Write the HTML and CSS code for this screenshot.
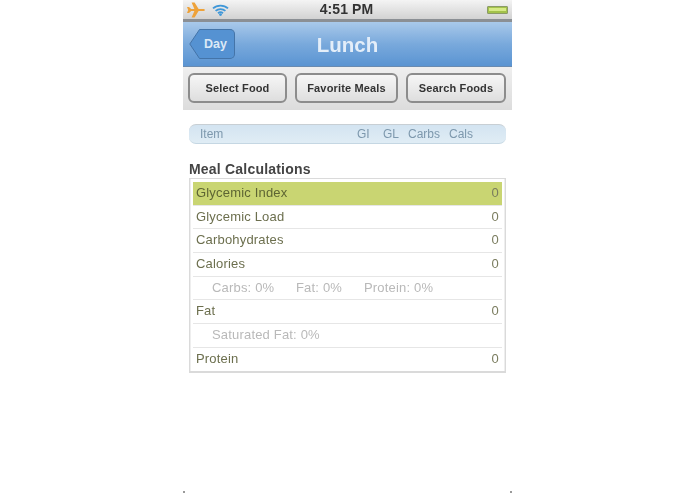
FILE: index.html
```html
<!DOCTYPE html>
<html lang="en">
<head>
<meta charset="utf-8">
<title>Lunch</title>
<link rel="stylesheet" href="styles.css">
</head>
<body>
<main class="phone">
  <header class="status">
    <div class="status-left">
      <svg class="plane" viewBox="0 0 18 16" width="18" height="16"><path d="M0 5 L2 5 L4.2 7 L7.4 7 L4.6 0.6 L7.6 0.6 L11.6 7 L15.6 7 C17.2 7 18 7.6 18 8 C18 8.4 17.2 9 15.6 9 L11.6 9 L7.6 15.4 L4.6 15.4 L7.4 9 L4.2 9 L2 11 L0 11 L1.2 8 Z" fill="#eea23a"/></svg>
      <svg class="wifi" viewBox="0 0 17 12" width="17" height="12"><path d="M1 4.4 C5 0.6 12 0.6 16 4.4 M3.6 6.9 C6.3 4.4 10.7 4.4 13.4 6.9 M6 9.2 C7.4 8 9.6 8 11 9.2" fill="none" stroke="#3f97d8" stroke-width="1.8"/><circle cx="8.5" cy="10.6" r="1.4" fill="#3f97d8"/></svg>
    </div>
    <div class="clock">4:51 PM</div>
    <div class="battery"><span class="battery-fill"></span></div>
  </header>
  <nav class="navbar">
    <div class="back"><svg class="back-tip" viewBox="0 0 13 30" width="13" height="30"><path d="M13 0.5 L10.5 0.5 L0.8 15 L10.5 29.5 L13 29.5 Z" fill="#5592d2" stroke="#4474a8"/></svg><span class="back-label">Day</span></div>
    <h1 class="title">Lunch</h1>
  </nav>
  <div class="toolbar">
    <button class="tool">Select Food</button>
    <button class="tool tool-wide">Favorite Meals</button>
    <button class="tool tool-last">Search Foods</button>
  </div>
  <section class="content">
    <div class="columns">
      <span class="col-item">Item</span>
      <span class="col-gi">GI</span>
      <span class="col-gl">GL</span>
      <span class="col-carbs">Carbs</span>
      <span class="col-cals">Cals</span>
    </div>
    <h2 class="heading">Meal Calculations</h2>
    <div class="table">
      <div class="row selected"><span>Glycemic Index</span><span class="value">0</span></div>
      <div class="row"><span>Glycemic Load</span><span class="value">0</span></div>
      <div class="row"><span>Carbohydrates</span><span class="value">0</span></div>
      <div class="row"><span>Calories</span><span class="value">0</span></div>
      <div class="row sub"><span class="sub-a">Carbs: 0%</span><span class="sub-b">Fat: 0%</span><span>Protein: 0%</span></div>
      <div class="row"><span>Fat</span><span class="value">0</span></div>
      <div class="row sub"><span>Saturated Fat: 0%</span></div>
      <div class="row last"><span>Protein</span><span class="value">0</span></div>
    </div>
  </section>
</main>
</body>
</html>
```

FILE: styles.css
```css
html, body {
  margin: 0;
  padding: 0;
  background: #fff;
}
body {
  width: 695px;
  height: 494px;
  overflow: hidden;
  font-family: "Liberation Sans", Arial, sans-serif;
}
.phone {
  width: 329px;
  height: 494px;
  margin-left: 183px;
  position: relative;
  filter: blur(0.45px);
}
.phone::before,
.phone::after {
  content: "";
  position: absolute;
  bottom: 1px;
  width: 2px;
  height: 2px;
  background: #9a9a9a;
}
.phone::before { left: 0; }
.phone::after { right: 0; }
.status {
  height: 19px;
  display: flex;
  align-items: center;
  background: linear-gradient(#f4f4f4, #d2d2d2);
  border-bottom: 3px solid #8b8f94;
}
.status-left {
  display: flex;
  align-items: center;
  gap: 7px;
  margin-left: 4px;
}
.clock {
  flex: 1;
  text-align: center;
  font-size: 14px;
  font-weight: 700;
  letter-spacing: 0.1px;
  color: #333;
  margin: 0 -2px 2px -25px;
}
.battery {
  width: 21px;
  height: 8px;
  margin-right: 4px;
  background: #a3c24a;
  border: 1px solid #8b9a68;
  border-radius: 1px;
  box-sizing: border-box;
}
.battery-fill {
  display: block;
  height: 3px;
  margin: 1px 1px 0;
  background: #d6ea86;
}
.navbar {
  height: 44px;
  display: flex;
  align-items: center;
  position: relative;
  background: linear-gradient(#a9c9ea, #79a9dc 50%, #5a94d2);
  border-bottom: 1px solid #6a8bb0;
}
.back {
  display: flex;
  align-items: center;
  margin-left: 6px;
  height: 30px;
}
.back-tip {
  display: block;
  margin-right: -1px;
}
.back-label {
  height: 28px;
  width: 33px;
  border: 1px solid #4474a8;
  border-left: 0;
  border-radius: 0 5px 5px 0;
  background: #5592d2;
  color: #dce9f6;
  font-size: 12.5px;
  font-weight: 700;
  line-height: 29px;
  text-indent: 3px;
}
.title {
  position: absolute;
  left: 0;
  right: 0;
  margin: 2px 0 0;
  text-align: center;
  font-size: 20.5px;
  font-weight: 700;
  color: #e4eef9;
}
.toolbar {
  height: 43px;
  box-sizing: border-box;
  padding: 6px 6px 0 5px;
  display: flex;
  justify-content: space-between;
  background: linear-gradient(#efefef, #dcdcdc);
}
.tool {
  width: 99px;
  height: 30px;
  padding: 0;
  border: 2px solid #8c8c8c;
  border-radius: 6px;
  background: linear-gradient(#f6f6f6, #dedede);
  font-family: inherit;
  font-size: 11px;
  font-weight: 700;
  letter-spacing: 0.15px;
  color: #333;
}
.tool-wide {
  width: 103px;
}
.tool-last {
  width: 100px;
}
.content {
  padding: 14px 6px 0;
}
.columns {
  height: 20px;
  display: flex;
  align-items: center;
  background: linear-gradient(#d3e4f1, #e0edf5);
  border-top: 1px solid #c8cfd4;
  border-bottom: 1px solid #c5d7e3;
  border-radius: 7px;
  box-sizing: border-box;
  font-size: 12px;
  color: #7d98ad;
}
.col-item { margin-left: 11px; width: 157px; }
.col-gi { width: 26px; }
.col-gl { width: 25px; }
.col-carbs { width: 41px; }
.heading {
  margin: 17px 0 0;
  font-size: 14px;
  line-height: 16px;
  font-weight: 700;
  letter-spacing: 0.2px;
  color: #444;
}
.table {
  margin-top: 1px;
  padding: 3px 3px 0;
  height: 189px;
  width: 309px;
  border: 1px solid #dadada;
  border-bottom-width: 2px;
  box-shadow: inset 1px 0 #eee, inset -1px 0 #eee;
}
.row {
  height: 22.7px;
  line-height: 22.7px;
  border-bottom: 1px solid #e6e6e6;
  display: flex;
  padding: 0 3px;
  font-size: 13px;
  letter-spacing: 0.18px;
  color: #6c6f4e;
}
.row.last {
  border-bottom: 0;
}
.selected {
  background: #c9d572;
  color: #5d6433;
}
.value {
  margin-left: auto;
  color: #7a7c5e;
}
.sub {
  padding-left: 19px;
  color: #b9b9b9;
}
.sub-a { width: 84px; }
.sub-b { width: 68px; }
```
